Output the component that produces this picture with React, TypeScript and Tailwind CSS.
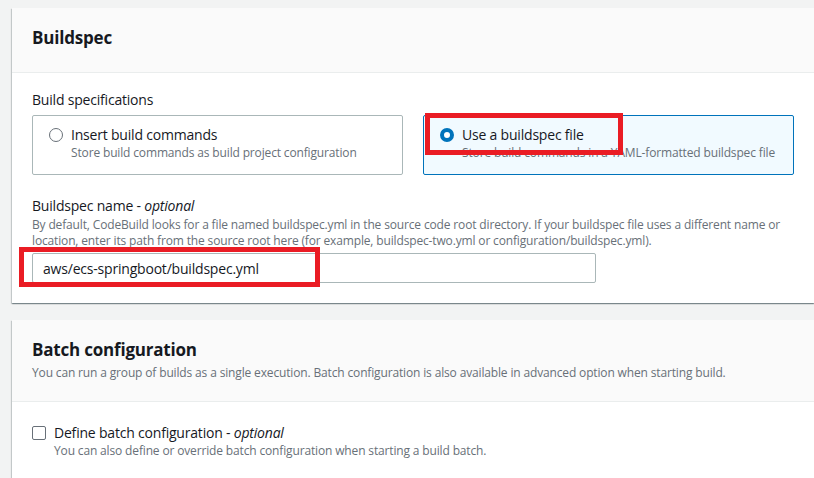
const font = "font-['Open_Sans','Noto_Sans',sans-serif]";

const RadioCard = ({
  title,
  desc,
  selected,
  children,
}: {
  title: string;
  desc: string;
  selected?: boolean;
  children?: React.ReactNode;
}) => (
  <div
    className={
      selected
        ? "relative h-[60px] rounded-[2px] border border-[#0073bb] bg-[#f1faff] pl-4 pt-[9px]"
        : "relative h-[60px] rounded-[2px] border border-[#aab7b8] bg-white pl-4 pt-[9px]"
    }
  >
    <div className="flex items-center gap-2">
      {selected ? (
        <span className="h-[14px] w-[14px] rounded-full border-[4px] border-[#0073bb] bg-white" />
      ) : (
        <span className="h-[14px] w-[14px] rounded-full border-[1.5px] border-[#687078] bg-white" />
      )}
      <span className="text-[14px] leading-5 tracking-[-0.2px] text-[#16191f]">{title}</span>
    </div>
    <div className="pl-[22px] text-[12px] leading-4 tracking-[-0.15px] text-[#687078]">{desc}</div>
    {children}
  </div>
);

export default function App() {
  return (
    <div className={`min-h-[478px] overflow-hidden bg-[#f2f3f3] pl-3 pt-2 ${font}`}>
      {/* Buildspec */}
      <section className="bg-white shadow-[0_1px_1px_0_rgba(0,28,36,0.3),1px_1px_1px_0_rgba(0,28,36,0.15),-1px_1px_1px_0_rgba(0,28,36,0.15)]">
        <div className="border-b border-[#eaeded] bg-[#fafafa] px-5 pb-[22px] pt-[18px]">
          <h2 className="text-[17px] font-bold leading-6 tracking-[-0.2px] text-[#16191f]">Buildspec</h2>
        </div>
        <div className="px-5 pb-5 pt-[17px]">
          <div className="text-[14px] leading-5 tracking-[-0.2px] text-[#16191f]">Build specifications</div>
          <div className="mt-[5px] grid grid-cols-2 gap-5">
            <RadioCard
              title="Insert build commands"
              desc="Store build commands as build project configuration"
            />
            <RadioCard
              selected
              title="Use a buildspec file"
              desc="Store build commands in a YAML-formatted buildspec file"
            >
              <div className="absolute left-[1px] top-[-3px] h-[42px] w-[198px] border-[5px] border-[#ea1c24]" />
            </RadioCard>
          </div>

          <div className="mt-[21px] text-[14px] leading-5 tracking-[-0.2px] text-[#16191f]">
            Buildspec name - <i>optional</i>
          </div>
          <p className="mt-[1px] whitespace-nowrap text-[12px] leading-4 tracking-[-0.15px] text-[#687078]">
            By default, CodeBuild looks for a file named buildspec.yml in the source code root
            directory. If your buildspec file uses a different name or
            <br />
            location, enter its path from the source root here (for example, buildspec-two.yml or
            configuration/buildspec.yml).
          </p>
          <div className="relative mt-1 w-[564px]">
            <input
              readOnly
              value="aws/ecs-springboot/buildspec.yml"
              className="h-[30px] w-full rounded-[2px] border border-[#aab7b8] bg-white px-[10px] text-[14px] tracking-[-0.2px] text-[#16191f] outline-none"
            />
            <div className="absolute left-[-13px] top-[-6px] h-[40px] w-[301px] border-[5px] border-[#ea1c24]" />
          </div>
        </div>
      </section>

      {/* Batch configuration */}
      <section className="mt-[17px] bg-white shadow-[0_1px_1px_0_rgba(0,28,36,0.3),1px_1px_1px_0_rgba(0,28,36,0.15),-1px_1px_1px_0_rgba(0,28,36,0.15)]">
        <div className="border-b border-[#eaeded] bg-[#fafafa] px-5 pb-5 pt-[18px]">
          <h2 className="text-[17px] font-bold leading-6 tracking-[-0.2px] text-[#16191f]">Batch configuration</h2>
          <p className="mt-[3px] whitespace-nowrap text-[12px] leading-4 tracking-[-0.15px] text-[#687078]">
            You can run a group of builds as a single execution. Batch configuration is also
            available in advanced option when starting build.
          </p>
        </div>
        <div className="px-5 pb-5 pt-[21px]">
          <div className="flex items-center gap-2">
            <span className="h-[14px] w-[14px] rounded-[2px] border-[1.5px] border-[#687078] bg-white" />
            <span className="text-[14px] leading-5 tracking-[-0.2px] text-[#16191f]">
              Define batch configuration - <i>optional</i>
            </span>
          </div>
          <p className="pl-[22px] text-[12px] leading-4 tracking-[-0.15px] text-[#687078]">
            You can also define or override batch configuration when starting a build batch.
          </p>
        </div>
      </section>
    </div>
  );
}
